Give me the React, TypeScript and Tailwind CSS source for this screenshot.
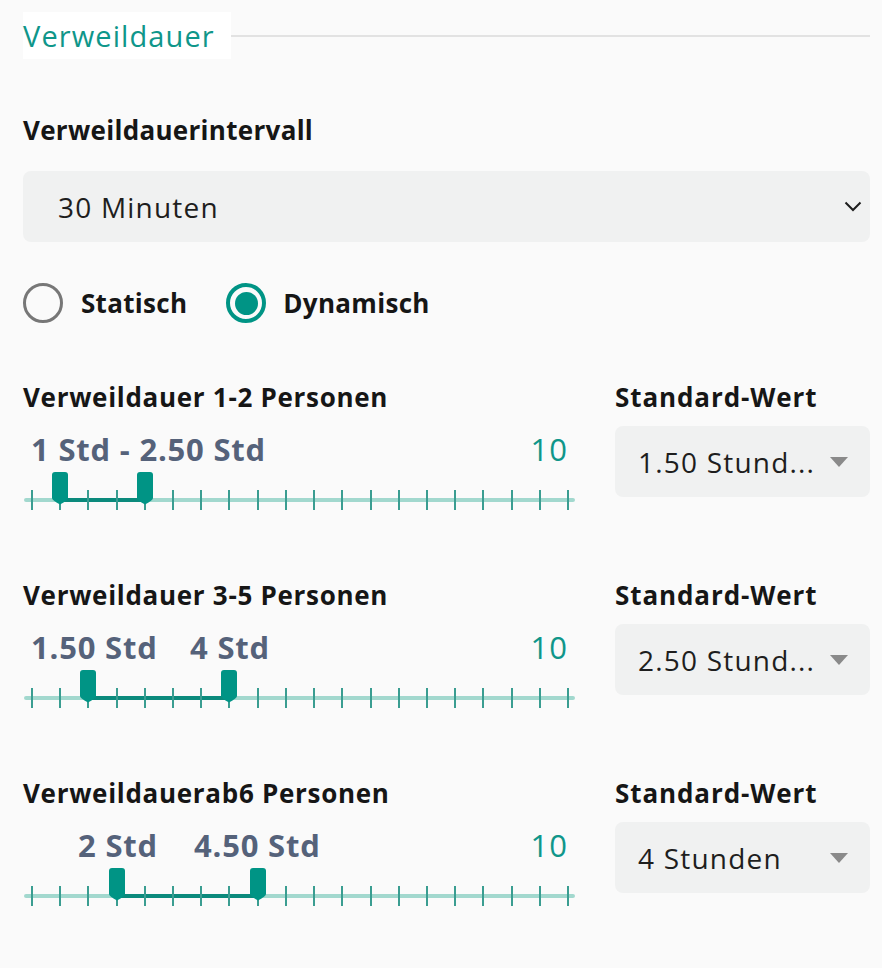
import React from "react";

const TEAL = "#0f968a";

type Row = {
    title: string;
    from: number;
    to: number;
    labels: { text: string; left: number }[];
    std: string;
};

const rows: Row[] = [
    { title: "Verweildauer 1-2 Personen", from: 1, to: 4, labels: [{ text: "1 Std - 2.50 Std", left: 8 }], std: "1.50 Stund..." },
    {
        title: "Verweildauer 3-5 Personen",
        from: 2,
        to: 7,
        labels: [
            { text: "1.50 Std", left: 8 },
            { text: "4 Std", left: 167 },
        ],
        std: "2.50 Stund...",
    },
    {
        title: "Verweildauerab6 Personen",
        from: 3,
        to: 8,
        labels: [
            { text: "2 Std", left: 55 },
            { text: "4.50 Std", left: 171 },
        ],
        std: "4 Stunden",
    },
];

const tickX = (i: number) => 9 + i * 28.21;

function Thumb({ idx }: { idx: number }) {
    return (
        <svg
            className="absolute top-[41px]"
            style={{ left: tickX(idx) - 8 }}
            width="16"
            height="33"
            viewBox="0 0 16 33"
        >
            <path d="M3 0 H13 Q16 0 16 3 V26 Q16 28 8 32.5 Q0 28 0 26 V3 Q0 0 3 0 Z" fill="#009485" />
        </svg>
    );
}

function RangeSlider({ row }: { row: Row }) {
    return (
        <div className="relative h-[80px] w-[552px]">
            {row.labels.map((l) => (
                <span
                    key={l.text}
                    className="absolute top-0 whitespace-nowrap text-[31px] font-bold leading-[36px] tracking-[0.8px] text-[#55627a]"
                    style={{ left: l.left }}
                >
                    {l.text}
                </span>
            ))}
            <span className="absolute right-[7px] top-0 text-[31px] leading-[36px] tracking-[1px] text-[#0f968a]">10</span>

            {/* track */}
            <div className="absolute left-[1px] right-0 top-[67px] h-[4px] rounded-full bg-[#a2d8ce]" />
            <div
                className="absolute top-[67px] h-[4px] bg-[#0b8a7c]"
                style={{ left: tickX(row.from), width: tickX(row.to) - tickX(row.from) }}
            />
            {Array.from({ length: 20 }).map((_, i) => (
                <div
                    key={i}
                    className="absolute top-[59px] h-[20px] w-[2px] bg-[#3a9d91]"
                    style={{ left: tickX(i) - 1 }}
                />
            ))}
            <Thumb idx={row.from} />
            <Thumb idx={row.to} />
        </div>
    );
}

export default function App() {
    return (
        <div className="min-h-screen bg-[#fafafa] pt-[12px] pl-[23px] pr-[12px]" style={{ fontFamily: "'Open Sans', 'Noto Sans', sans-serif" }}>
            <div className="flex items-center">
                <div className="flex h-[47px] items-center bg-white pr-[16px] text-[29px] leading-none tracking-[1.1px]" style={{ color: TEAL }}>
                    Verweildauer
                </div>
                <div className="h-[2px] flex-1 bg-[#e2e2e2]" />
            </div>

            <div className="mt-[55px] text-[26px] font-bold leading-[32px] tracking-[0.3px] text-[#161616]">Verweildauerintervall</div>

            <div className="mt-[25px] flex h-[71px] items-center justify-between rounded-[8px] bg-[#f0f1f1] pl-[35px] pr-[8px]">
                <span className="text-[28px] tracking-[1.2px] text-[#1e1e1e]">30 Minuten</span>
                <svg width="18" height="11" viewBox="0 0 18 11" className="mr-[0px]">
                    <path d="M1.5 1.5 L9 9 L16.5 1.5" fill="none" stroke="#1e1e1e" strokeWidth="2" />
                </svg>
            </div>

            <div className="mt-[41px] flex items-center">
                <span className="box-border h-[40px] w-[40px] rounded-full border-[3.5px] border-[#777]" />
                <span className="ml-[18px] text-[26px] font-bold leading-[32px] tracking-[0.3px] text-[#161616]">Statisch</span>
                <span className="ml-[39px] box-border flex h-[40px] w-[40px] items-center justify-center rounded-full border-[4px] border-[#009485]">
                    <span className="h-[23px] w-[23px] rounded-full bg-[#009485]" />
                </span>
                <span className="ml-[17px] text-[26px] font-bold leading-[32px] tracking-[0.3px] text-[#161616]">Dynamisch</span>
            </div>

            <div className="mt-[58px] flex flex-col gap-[68px]">
                {rows.map((row) => (
                    <div key={row.title} className="flex gap-[40px]">
                        <div className="flex w-[552px] flex-col gap-[18px]">
                            <div className="text-[26px] font-bold leading-[32px] tracking-[0.7px] text-[#161616]">{row.title}</div>
                            <RangeSlider row={row} />
                        </div>
                        <div className="flex w-[255px] flex-col gap-[13px]">
                            <div className="text-[26px] font-bold leading-[32px] tracking-[0.9px] text-[#161616]">Standard-Wert</div>
                            <div className="flex h-[71px] items-center justify-between rounded-[8px] bg-[#f0f1f1] pl-[23px] pr-[22px]">
                                <span className="whitespace-nowrap text-[28px] tracking-[1.2px] text-[#1e1e1e]">{row.std}</span>
                                <svg width="18" height="10" viewBox="0 0 18 10">
                                    <path d="M0 0 H18 L9 10 Z" fill="#8a8a8a" />
                                </svg>
                            </div>
                        </div>
                    </div>
                ))}
            </div>
        </div>
    );
}
